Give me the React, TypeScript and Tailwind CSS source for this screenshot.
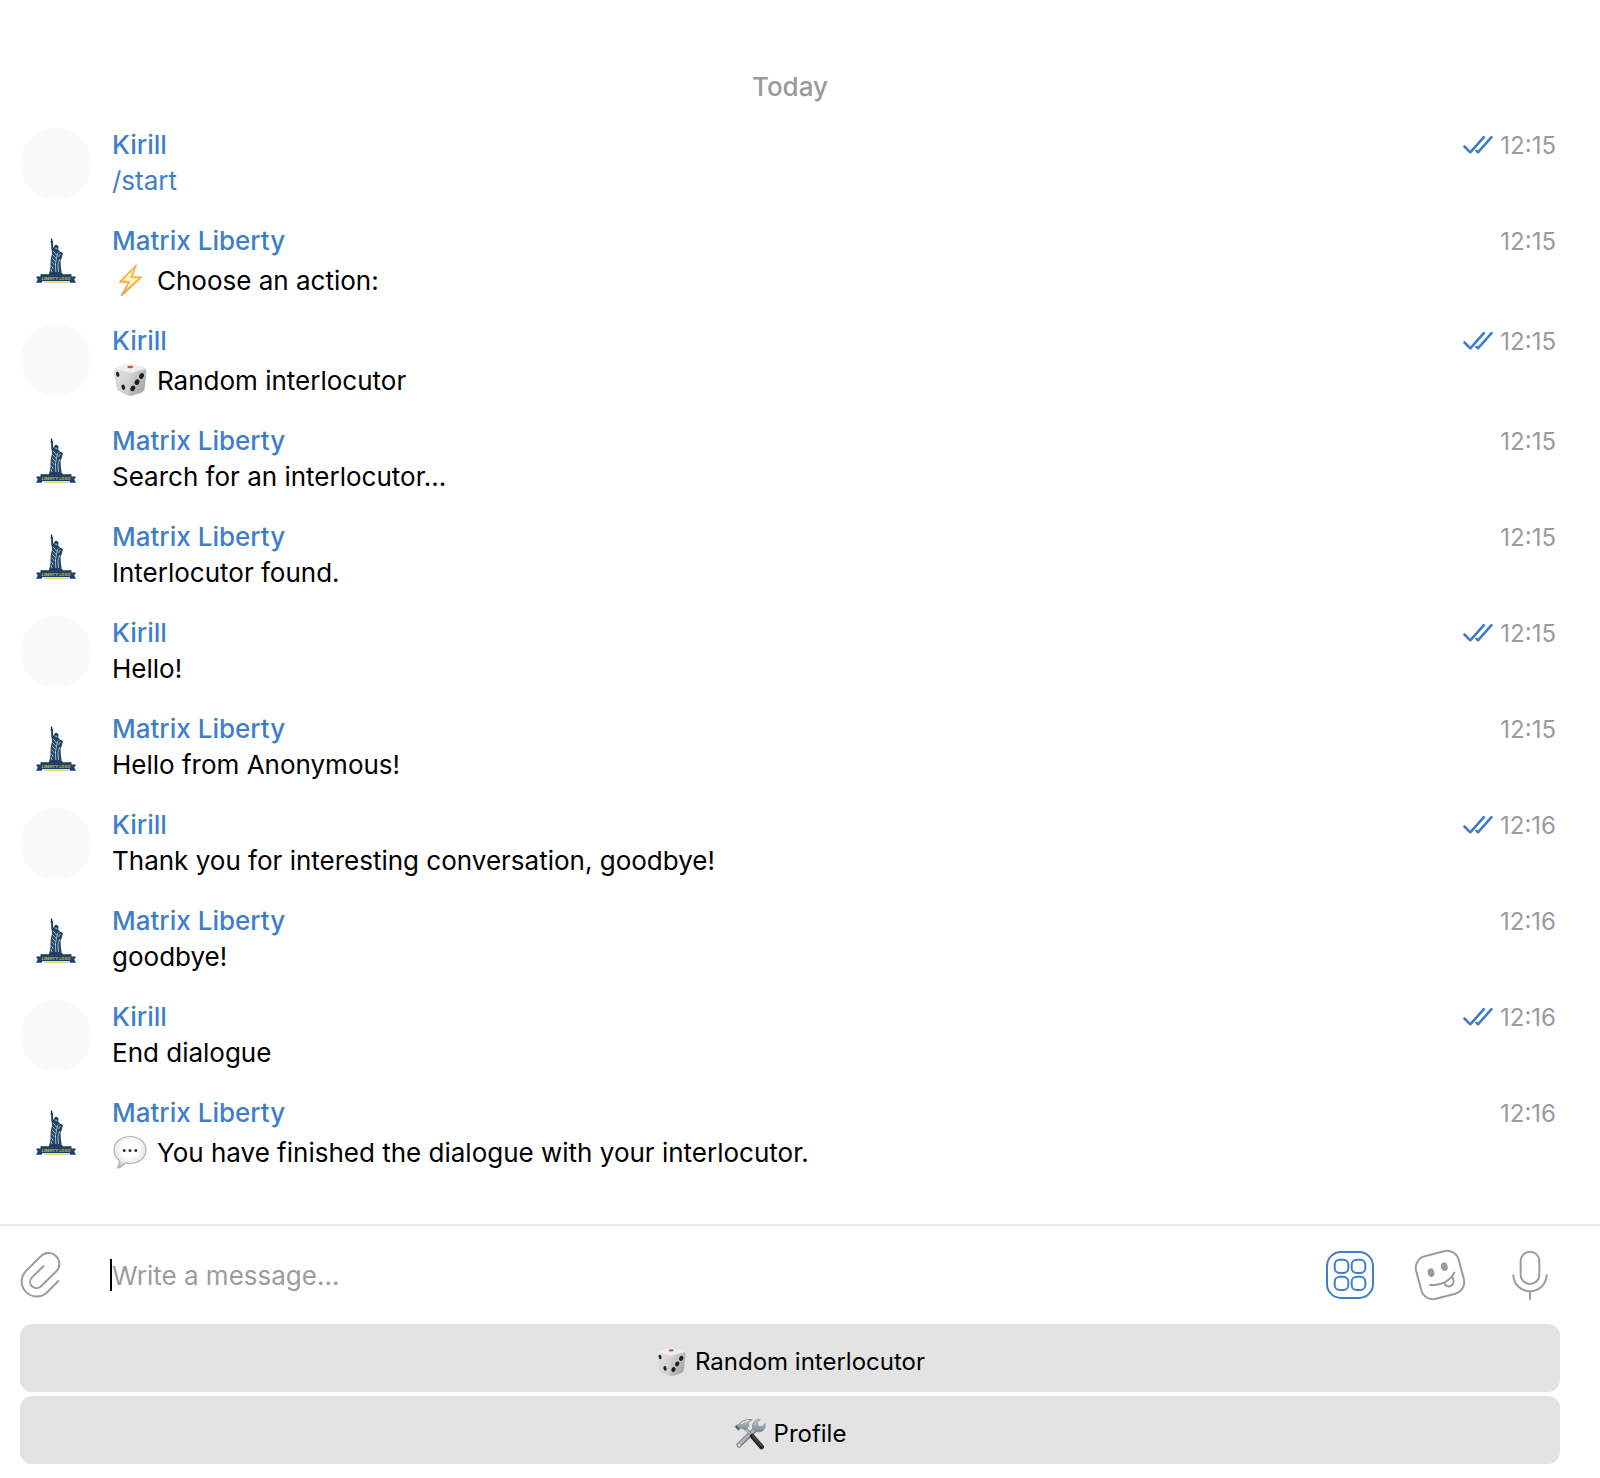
import type { ReactNode } from "react";

function Bolt() {
  return (
    <svg viewBox="0 0 36 36" className="mb-0.5 size-9 shrink-0" aria-hidden="true">
      <defs>
        <linearGradient id="bolt" x1="0" y1="0" x2="0" y2="1">
          <stop offset="0" stopColor="#f5b568" />
          <stop offset="0.5" stopColor="#f7a92f" />
          <stop offset="1" stopColor="#ee9650" />
        </linearGradient>
      </defs>
      <path d="M24.3 3 7.8 19.8 17 20.4 9.6 33.4 29.4 15.2 19.8 14.8z" fill="#fdd870" stroke="url(#bolt)" strokeWidth="1.5" strokeLinejoin="round" />
      <path d="M21 8.500 11.400 18.200 19 18.800 14.400 26.500 25.400 16.700 17.400 16.300z" fill="#fffbe4" />
    </svg>
  );
}

function Dice({ className }: { className: string }) {
  return (
    <svg viewBox="0 0 36 36" className={className} aria-hidden="true">
      <defs>
        <linearGradient id="dice-left" x1="0" y1="0" x2="1" y2="1">
          <stop offset="0" stopColor="#e4e4e4" />
          <stop offset="1" stopColor="#c9c9c9" />
        </linearGradient>
        <linearGradient id="dice-right" x1="0" y1="0" x2="1" y2="1">
          <stop offset="0" stopColor="#dadada" />
          <stop offset="1" stopColor="#9c9c9c" />
        </linearGradient>
      </defs>
      <path d="M5 5.5Q2 6.400 2.100 9.500L4.600 25Q5 28 7.500 29.300L15 33Q17.500 34.200 20.500 33.500L29 30.800Q32 29.600 32.500 26.500L34.300 10Q34.500 6.800 31.500 5.500L23 2.700Q17.500 1.300 12.500 2.600z" fill="#d6d6d6" />
      <path d="M2.200 8Q3 6 6 6.800L15 10Q17.800 11.200 17.700 14L17 33.500Q16 33.600 15 33L7.500 29.300Q5 28 4.600 25L2.100 10z" fill="url(#dice-left)" />
      <path d="M34.300 8.500Q33.500 6.600 30.500 7.300L20.500 10Q17.900 11 17.700 14L17 33.600Q19 34 20.500 33.500L29 30.800Q32 29.600 32.500 26.500L34.400 10z" fill="url(#dice-right)" />
      <path d="M5 5.600 12.500 2.600Q17.500 1.300 23 2.700L31.500 5.500Q33.600 6.600 30.500 7.600L20.500 10.400Q18 11.300 15 10.200L5.500 7.400Q3.200 6.600 5 5.600z" fill="#eeeeee" />
      <ellipse cx="18.200" cy="5" rx="2.900" ry="1.300" fill="#e2453c" />
      <ellipse cx="5.700" cy="12.300" rx="1.600" ry="2.600" fill="#1d1d1d" transform="rotate(-14 5.700 12.300)" />
      <ellipse cx="11.300" cy="25.200" rx="1.700" ry="2.700" fill="#1d1d1d" transform="rotate(-14 11.300 25.200)" />
      <ellipse cx="29.500" cy="14" rx="2.300" ry="2.900" fill="#1d1d1d" transform="rotate(25 29.500 14)" />
      <ellipse cx="25" cy="20.200" rx="2.300" ry="2.900" fill="#1d1d1d" transform="rotate(25 25 20.200)" />
      <ellipse cx="20.800" cy="26.400" rx="2.300" ry="2.900" fill="#1d1d1d" transform="rotate(25 20.800 26.400)" />
    </svg>
  );
}

function Speech() {
  return (
    <svg viewBox="0 0 36 36" className="mb-0.5 size-9 shrink-0" aria-hidden="true">
      <defs>
        <radialGradient id="speech" cx="0.5" cy="0.4" r="0.62">
          <stop offset="0.4" stopColor="#ffffff" />
          <stop offset="0.75" stopColor="#e9e9e9" />
          <stop offset="1" stopColor="#b4b4b4" />
        </radialGradient>
      </defs>
      <path d="M18 2.500C26.800 2.500 34 7.800 34 16S26.800 29.500 18 29.500Q15.500 29.500 13.200 28.900Q10.500 33 5.500 34Q7.800 30.500 7.200 26.400Q2 22.500 2 16C2 7.800 9.200 2.500 18 2.500z" fill="url(#speech)" stroke="#b5b5b5" strokeWidth="1.200" />
      <circle cx="12.200" cy="16.600" r="1.500" fill="#333" />
      <circle cx="18" cy="16.600" r="1.500" fill="#333" />
      <circle cx="23.800" cy="16.600" r="1.500" fill="#333" />
    </svg>
  );
}

function Tools() {
  return (
    <svg viewBox="0 0 36 36" className="size-8 shrink-0" aria-hidden="true">
      <defs>
        <linearGradient id="steel" x1="0" y1="0" x2="0" y2="1">
          <stop offset="0" stopColor="#c3ccd6" />
          <stop offset="1" stopColor="#7d868f" />
        </linearGradient>
      </defs>
      <path d="M24.200 12.500 5.500 30.500" stroke="#83797b" strokeWidth="5.600" strokeLinecap="round" />
      <path d="M24.200 12 5.500 30" stroke="#b3b5ba" strokeWidth="3.200" strokeLinecap="round" />
      <circle cx="5.800" cy="31" r="1.300" fill="#f0f0f0" />
      <path d="M29.500 1.500 26 5.200 27.500 9.500 32 9.800 34.800 6.200Q36 12 31.500 14.800Q27.500 16.600 23.800 14.600L20.800 11.500Q20 6.500 23 3.500Q26 1 29.500 1.500z" fill="url(#steel)" stroke="#7e8a96" strokeWidth="0.800" />
      <path d="M12.500 11 21 21" stroke="#7e8790" strokeWidth="3.200" />
      <path d="M12 11 20.500 20.500" stroke="#c0c7ce" strokeWidth="1.200" />
      <path d="M20.500 20.500 31 32.500" stroke="#26282b" strokeWidth="5.400" strokeLinecap="round" />
      <path d="M21 20 31 31" stroke="#55585c" strokeWidth="1.200" strokeLinecap="round" />
      <path d="M6.500 6Q12 .8 20.500 1.800Q16.500 3.200 15.800 6.500L16.600 9.300 11.800 13.600 9.300 11.400Q7.500 10.600 6.200 12.400L5.200 14 1 9.800 2.500 8.200Q5 8.200 6.500 6z" fill="url(#steel)" stroke="#6d7882" strokeWidth="0.800" />
      <path d="M8 6.500Q12 3 16.500 2.800" stroke="#edf2f7" strokeWidth="1.200" fill="none" />
      <path d="m2.300 9.300 3.400 3.400" stroke="#414950" strokeWidth="1.400" />
    </svg>
  );
}

function LibertyAvatar() {
  return (
    <svg viewBox="0 0 72 72" className="size-18 shrink-0" role="img" aria-label="Matrix Liberty">
      <g fill="#1e4263">
        <path d="M31.300 14Q32.800 15.300 32.500 17L33.300 17.300 32.900 19.300 33.200 23 34.200 24.200 34 22.800 35 21 36.400 20.800 37.800 21.600 38.500 23 38.200 25.800 40 27.500 43 29 41.600 34.500 40.600 36 40.800 43 41.800 49.500H29.300L30.400 43.500 30.800 35 31.800 31 32 28.500 31.200 24 31.100 19.400 30.400 17.500 31 17Q30.400 15.500 31.300 14z" />
        <path d="M29 49H42.500V51H29z" />
        <path d="M16 52.500H22V58.700H16L17.800 55.600z" />
        <path d="M56 52.500H50V58.700H56L54.200 55.600z" />
        <path d="M20.500 50.200H51.500V57.200H20.500z" />
      </g>
      <g stroke="#e8eef3" strokeWidth="0.700" fill="none">
        <path d="M33 27 37 31.500M32.500 30.500 36 34.500M32.300 34 35 37.500M31.700 37.500 34.500 41M31.300 41.500 33.500 45M38 28.500 36.500 34 35.500 40 35.800 48M39.500 35 38 41 38.500 48M31 45 32 48M40.300 30 38.500 33" />
        <path d="M35 24.200 37.300 24.600" />
      </g>
      <path d="M24 58.500H49.500" stroke="#f3d48b" strokeWidth="1.200" />
      <text x="36" y="55.500" textAnchor="middle" fontSize="4" fontWeight="700" fill="#c9b765" fontFamily="Inter, sans-serif">
        LIBERTY LOGO
      </text>
    </svg>
  );
}

function ReadMark() {
  return (
    <svg viewBox="0 0 30 20" className="h-5 w-[30px]" fill="none" stroke="#3d7fcc" strokeWidth="2.600" strokeLinecap="round" strokeLinejoin="round" role="img" aria-label="Read">
      <path d="M1.500 11.500 7.300 17.300 20.800 2.200" />
      <path d="M13.500 15.800 15 17.300 28.500 2.200" />
    </svg>
  );
}

type Message = { own?: boolean; time: string; text: ReactNode; icon?: ReactNode };

const messages: Message[] = [
  { own: true, time: "12:15", text: <a href="#start" className="text-[#3f7fc9]">/start</a> },
  { time: "12:15", icon: <Bolt />, text: "Choose an action:" },
  { own: true, time: "12:15", icon: <Dice className="mb-0.5 size-9 shrink-0" />, text: "Random interlocutor" },
  { time: "12:15", text: "Search for an interlocutor..." },
  { time: "12:15", text: "Interlocutor found." },
  { own: true, time: "12:15", text: "Hello!" },
  { time: "12:15", text: "Hello from Anonymous!" },
  { own: true, time: "12:16", text: "Thank you for interesting conversation, goodbye!" },
  { time: "12:16", text: "goodbye!" },
  { own: true, time: "12:16", text: "End dialogue" },
  { time: "12:16", icon: <Speech />, text: "You have finished the dialogue with your interlocutor." },
];

function MessageRow({ own, time, text, icon }: Message) {
  return (
    <li className="flex items-start gap-5">
      {own ? <div className="size-18 shrink-0 rounded-full bg-[#f9fbfa]" /> : <LibertyAvatar />}
      <div className="min-w-0 flex-1">
        <div className="flex items-center justify-between pr-1 leading-[34px]">
          <span className="font-medium text-[#3f7fc9]">{own ? "Kirill" : "Matrix Liberty"}</span>
          <span className="flex items-center gap-[7px] text-2xl leading-8 text-[#9b9b9b]">
            {own && <ReadMark />}
            <time className="pt-0.5">{time}</time>
          </span>
        </div>
        {icon ? (
          <p className="flex items-center gap-[9px] pt-1 leading-[38px]">
            {icon}
            <span>{text}</span>
          </p>
        ) : (
          <p className="leading-[38px]">{text}</p>
        )}
      </div>
    </li>
  );
}

function Composer() {
  return (
    <form className="flex items-center border-t-2 border-[#e7e7e7] pr-[45px] pl-[19px]" onSubmit={(e) => e.preventDefault()}>
      <button type="button" aria-label="Attach file" className="shrink-0">
        <svg viewBox="57 120 126 144" className="h-12 w-[42px]" fill="none" stroke="#9c9c9c" strokeWidth="6" strokeLinecap="round">
          <path d="M175 210 140 245A45 45 0 0 1 76 182L122 136C133 124 154 122 167 134C181 147 182 167 169 181L123 226C115 234 104 233 96 226C88 218 88 207 96 199L130 166" />
        </svg>
      </button>
      <div className="ml-[49px] flex min-w-0 flex-1 items-center">
        <span className="h-8 w-0.5 shrink-0 bg-black" />
        <input type="text" aria-label="Message" placeholder="Write a message..." className="h-[98px] min-w-0 flex-1 outline-none placeholder:text-[#9c9c9c] placeholder:opacity-100" />
      </div>
      <div className="flex shrink-0 items-center gap-10">
        <button type="button" aria-label="Bot keyboard">
          <svg viewBox="75 117 150 150" className="size-[50px]" fill="none" stroke="#3d7fcc" strokeWidth="6">
            <rect x="81" y="123" width="138" height="138" rx="42" />
            <rect x="104" y="146" width="41" height="40" rx="15" />
            <rect x="155" y="146" width="41" height="40" rx="15" />
            <rect x="104" y="197" width="41" height="40" rx="15" />
            <rect x="155" y="197" width="41" height="40" rx="15" />
          </svg>
        </button>
        <button type="button" aria-label="Stickers">
          <svg viewBox="345 116 150 150" className="size-[50px] overflow-visible" fill="none" stroke="#9c9c9c" strokeWidth="6" strokeLinecap="round" strokeLinejoin="round">
            <rect x="354" y="125" width="132" height="132" rx="36" transform="rotate(-15 420 191)" />
            <g fill="#9c9c9c" stroke="none">
              <ellipse cx="393" cy="184" rx="10" ry="13" transform="rotate(-15 393 184)" />
              <ellipse cx="433" cy="166" rx="10" ry="13" transform="rotate(-15 433 166)" />
            </g>
            <path d="M390 221C425 222 448 211 463 184" />
            <path d="M433 215C437 228 452 229 458 219C462 213 461 205 457 197" />
          </svg>
        </button>
        <button type="button" aria-label="Record voice message">
          <svg viewBox="615 117 150 150" className="size-[50px]" fill="none" stroke="#9c9c9c" strokeWidth="6" strokeLinecap="round">
            <rect x="662" y="122" width="56" height="97" rx="28" />
            <path d="M640 193C642 221 663 241 690 241S738 221 740 193M690 241V264" />
          </svg>
        </button>
      </div>
    </form>
  );
}

function ReplyButton({ icon, children }: { icon: ReactNode; children: ReactNode }) {
  return (
    <button type="button" className="flex h-[68px] w-full items-center justify-center gap-2 rounded-xl bg-[#e3e3e3] pt-2 text-2xl">
      {icon}
      <span>{children}</span>
    </button>
  );
}

export default function App() {
  return (
    <main className="bg-white pb-3.5 font-['Inter',sans-serif] text-[26px] text-black">
      <section className="pt-[67px] pr-10 pb-[52px] pl-5">
        <h2 className="mb-[21px] text-center leading-10 font-medium text-[#999999]">Today</h2>
        <ul className="flex flex-col gap-6">
          {messages.map((message, i) => (
            <MessageRow key={i} {...message} />
          ))}
        </ul>
      </section>
      <Composer />
      <div className="flex flex-col gap-1 pr-10 pl-5">
        <ReplyButton icon={<Dice className="size-8 shrink-0" />}>Random interlocutor</ReplyButton>
        <ReplyButton icon={<Tools />}>Profile</ReplyButton>
      </div>
    </main>
  );
}
